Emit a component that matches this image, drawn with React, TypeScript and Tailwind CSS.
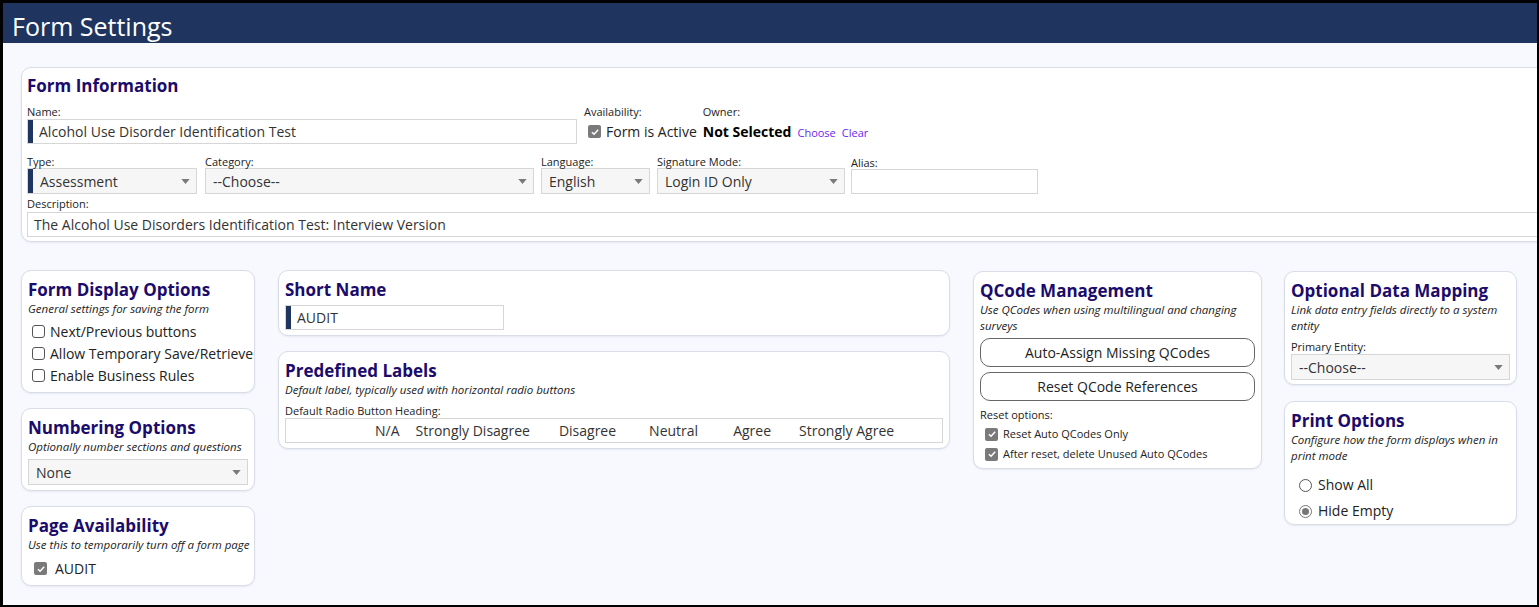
import React from 'react';

const navy = 'bg-[#1f3560]';

function Check({ checked = false }: { checked?: boolean }) {
  return checked ? (
    <span className="inline-flex h-[13px] w-[13px] shrink-0 items-center justify-center rounded-[2px] bg-[#7a7a7a]">
      <svg viewBox="0 0 12 12" className="h-[10px] w-[10px]">
        <path d="M2.3 6.2 L4.9 8.7 L9.8 3.3" fill="none" stroke="#fff" strokeWidth="1.8" />
      </svg>
    </span>
  ) : (
    <span className="inline-block h-[13px] w-[13px] shrink-0 rounded-[3px] border border-[#555] bg-white" />
  );
}

function Radio({ checked = false }: { checked?: boolean }) {
  return checked ? (
    <span className="inline-flex h-[13px] w-[13px] shrink-0 items-center justify-center rounded-full border border-[#777] bg-white">
      <span className="h-[7px] w-[7px] rounded-full bg-[#777]" />
    </span>
  ) : (
    <span className="inline-block h-[13px] w-[13px] shrink-0 rounded-full border border-[#555] bg-white" />
  );
}

function Caret() {
  return (
    <svg viewBox="0 0 10 6" className="h-[5px] w-[9px] shrink-0">
      <path d="M0 0 H10 L5 6 Z" fill="#7a7a7a" />
    </svg>
  );
}

function Label({ children }: { children: React.ReactNode }) {
  return <div className="text-[11px] leading-[13px] text-[#222]">{children}</div>;
}

function Select({ value, accent = false, className = '' }: { value: string; accent?: boolean; className?: string }) {
  return (
    <div className={`flex h-[26px] items-center border border-[#d6d6d6] bg-[#f6f6f6] ${className}`}>
      {accent && <span className={`h-full w-[5px] shrink-0 ${navy}`} />}
      <span className="flex-1 truncate px-[7px] text-[14px] text-[#333]">{value}</span>
      <span className="pr-[6px]">
        <Caret />
      </span>
    </div>
  );
}

function TextBox({ value = '', accent = false, className = '' }: { value?: string; accent?: boolean; className?: string }) {
  return (
    <div className={`flex h-[25px] items-center border border-[#d6d6d6] bg-white ${className}`}>
      {accent && <span className={`h-full w-[5px] shrink-0 ${navy}`} />}
      <span className="flex-1 truncate px-[6px] text-[14px] text-[#333]">{value}</span>
    </div>
  );
}

function Card({
  title,
  subtitle,
  nowrap = false,
  children,
  className = '',
}: {
  title: string;
  subtitle?: string;
  nowrap?: boolean;
  children?: React.ReactNode;
  className?: string;
}) {
  return (
    <section
      className={`rounded-[10px] border border-[#d9dde8] bg-white px-[6px] pb-[7px] pt-[8px] shadow-[0_1px_2px_rgba(30,40,80,0.08)] ${className}`}
    >
      <h2 className="text-[17px] font-bold leading-[22px] text-[#1b0b6b]">{title}</h2>
      {subtitle && (
        <p className={`text-[11.5px] italic leading-[16px] text-[#222] ${nowrap ? 'whitespace-nowrap' : ''}`}>{subtitle}</p>
      )}
      {children}
    </section>
  );
}

const radioHeadings = [
  { text: 'N/A', ml: 'ml-[89px]' },
  { text: 'Strongly Disagree', ml: 'ml-[16px]' },
  { text: 'Disagree', ml: 'ml-[29px]' },
  { text: 'Neutral', ml: 'ml-[33px]' },
  { text: 'Agree', ml: 'ml-[35px]' },
  { text: 'Strongly Agree', ml: 'ml-[28px]' },
];

export default function App() {
  return (
    <div className="h-[607px] w-[1539px] overflow-hidden border-2 border-l-[3px] border-t-[3px] border-black bg-[#f7f9fe] font-['Open_Sans',sans-serif] text-[#333]">
      <header className={`h-[40px] ${navy} px-[9px] pt-[5px] text-[25px] leading-[36px] text-white`}>Form Settings</header>

      <div className="px-[18px] pt-[24px]">
        {/* Form Information */}
        <section className="w-[1530px] rounded-[10px] border border-[#d9dde8] bg-white px-[5px] pb-[4px] pt-[7px] shadow-[0_1px_2px_rgba(30,40,80,0.08)]">
          <h2 className="text-[17px] font-bold leading-[22px] text-[#1b0b6b]">Form Information</h2>

          <div className="mt-[8px] flex items-end gap-[7px]">
            <div className="w-[550px]">
              <Label>Name:</Label>
              <TextBox accent value="Alcohol Use Disorder Identification Test" className="mt-[1px]" />
            </div>
            <div className="mb-[2px]">
              <Label>Availability:</Label>
              <div className="mt-[3px] flex items-center gap-[5px] pl-[4px] text-[14px] text-[#222]">
                <Check checked />
                <span>Form is Active</span>
              </div>
            </div>
            <div className="mb-[2px] ml-[-1px]">
              <Label>Owner:</Label>
              <div className="mt-[3px] flex items-baseline gap-[6px]">
                <span className="text-[14px] font-bold text-black">Not Selected</span>
                <span className="text-[11px] text-[#6b1ff0]">Choose</span>
                <span className="text-[11px] text-[#6b1ff0]">Clear</span>
              </div>
            </div>
          </div>

          <div className="mt-[11px] flex items-end gap-[7px]">
            <div className="w-[170px]">
              <Label>Type:</Label>
              <Select accent value="Assessment" />
            </div>
            <div className="ml-[1px] w-[329px]">
              <Label>Category:</Label>
              <Select value="--Choose--" />
            </div>
            <div className="w-[109px]">
              <Label>Language:</Label>
              <Select value="English" />
            </div>
            <div className="w-[188px]">
              <Label>Signature Mode:</Label>
              <Select value="Login ID Only" />
            </div>
            <div className="ml-[-1px] w-[187px]">
              <Label>Alias:</Label>
              <TextBox />
            </div>
          </div>

          <div className="mt-[3px]">
            <Label>Description:</Label>
            <TextBox value="The Alcohol Use Disorders Identification Test: Interview Version" className="mt-[2px]" />
          </div>
        </section>

        <div className="mt-[28px] flex items-start gap-[22px]">
          {/* Column 1 */}
          <div className="flex w-[234px] flex-col gap-[15px]">
            <Card title="Form Display Options" subtitle="General settings for saving the form" className="h-[123px]">
              <div className="mt-[6px] flex flex-col gap-[5px] pl-[4px] text-[14px] leading-[17px] text-[#222]">
                {['Next/Previous buttons', 'Allow Temporary Save/Retrieve', 'Enable Business Rules'].map((t) => (
                  <label key={t} className="flex items-center gap-[5px] whitespace-nowrap">
                    <Check />
                    {t}
                  </label>
                ))}
              </div>
            </Card>
            <Card title="Numbering Options" subtitle="Optionally number sections and questions" nowrap className="h-[83px]">
              <Select value="None" className="mt-[4px]" />
            </Card>
            <Card title="Page Availability" subtitle="Use this to temporarily turn off a form page" nowrap className="h-[80px]">
              <label className="mt-[7px] flex items-center gap-[8px] pl-[6px] text-[14px] leading-[17px] text-[#222]">
                <Check checked />
                AUDIT
              </label>
            </Card>
          </div>

          {/* Column 2 */}
          <div className="ml-[1px] flex w-[672px] flex-col gap-[15px]">
            <Card title="Short Name" className="h-[66px]">
              <TextBox accent value="AUDIT" className="mt-[4px] w-[219px]" />
            </Card>
            <Card title="Predefined Labels" subtitle="Default label, typically used with horizontal radio buttons" className="h-[98px]">
              <div className="mt-[6px]">
                <Label>Default Radio Button Heading:</Label>
              </div>
              <div className="mt-[1px] flex h-[25px] items-center border border-[#d6d6d6] bg-white text-[14px] text-[#333]">
                {radioHeadings.map((h) => (
                  <span key={h.text} className={`${h.ml} whitespace-nowrap`}>
                    {h.text}
                  </span>
                ))}
              </div>
            </Card>
          </div>

          {/* Column 3 */}
          <div className="ml-[1px] flex w-[289px] flex-col pt-[1px]">
            <Card
              title="QCode Management"
              subtitle="Use QCodes when using multilingual and changing surveys"
              className="h-[198px]"
            >
              <div className="mt-[4px] flex flex-col gap-[5px]">
                {['Auto-Assign Missing QCodes', 'Reset QCode References'].map((t) => (
                  <button
                    key={t}
                    type="button"
                    className="h-[29px] w-full rounded-[10px] border border-[#666] bg-white text-[14px] text-[#222]"
                  >
                    {t}
                  </button>
                ))}
              </div>
              <div className="mt-[7px] text-[11px] leading-[14px] text-[#222]">Reset options:</div>
              <div className="mt-[5px] flex flex-col gap-[6px] pl-[5px] text-[11px] leading-[14px] text-[#222]">
                <label className="flex items-center gap-[5px]">
                  <Check checked />
                  Reset Auto QCodes Only
                </label>
                <label className="flex items-center gap-[5px]">
                  <Check checked />
                  After reset, delete Unused Auto QCodes
                </label>
              </div>
            </Card>
          </div>

          {/* Column 4 */}
          <div className="flex w-[233px] flex-col gap-[16px] pt-[1px]">
            <Card
              title="Optional Data Mapping"
              subtitle="Link data entry fields directly to a system entity"
              className="h-[114px]"
            >
              <div className="mt-[6px]">
                <Label>Primary Entity:</Label>
              </div>
              <Select value="--Choose--" className="mt-[1px]" />
            </Card>
            <Card
              title="Print Options"
              subtitle="Configure how the form displays when in print mode"
              className="h-[124px]"
            >
              <div className="mt-[12px] flex flex-col gap-[8px] pl-[8px] text-[14px] leading-[18px] text-[#222]">
                <label className="flex items-center gap-[6px]">
                  <Radio />
                  Show All
                </label>
                <label className="flex items-center gap-[6px]">
                  <Radio checked />
                  Hide Empty
                </label>
              </div>
            </Card>
          </div>
        </div>
      </div>
    </div>
  );
}
